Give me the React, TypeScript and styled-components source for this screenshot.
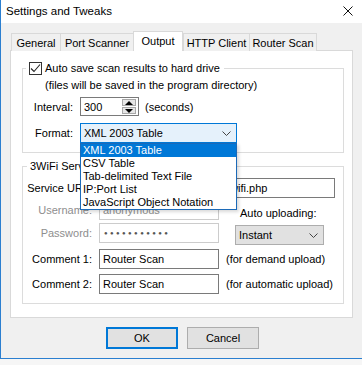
import React from 'react';
import styled, { createGlobalStyle } from 'styled-components';

const GlobalStyle = createGlobalStyle`
  html, body {
    margin: 0;
    padding: 0;
    background: #f6f6f6;
    overflow: hidden;
  }
  body {
    font-family: "Liberation Sans", Arial, sans-serif;
    font-size: 11px;
    color: #000;
  }
  * {
    box-sizing: border-box;
  }
`;

const tabs = [
  { title: 'General', width: 49 },
  { title: 'Port Scanner', width: 73 },
  { title: 'Output', width: 50 },
  { title: 'HTTP Client', width: 66 },
  { title: 'Router Scan', width: 68 },
];

const formats = [
  'XML 2003 Table',
  'CSV Table',
  'Tab-delimited Text File',
  'IP:Port List',
  'JavaScript Object Notation',
];

function Chevron() {
  return (
    <svg width="9" height="5" viewBox="0 0 9 5">
      <path d="M0.5 0.5 L4.5 4.5 L8.5 0.5" fill="none" stroke="#444" strokeWidth="1" />
    </svg>
  );
}

function App() {
  return (
    <>
      <GlobalStyle />
      <S.Window>
        <S.TitleBar>
          <S.Title>Settings and Tweaks</S.Title>
          <S.Close>
            <svg width="10" height="10" viewBox="0 0 10 10">
              <path d="M0.5 0.5 L9.5 9.5 M9.5 0.5 L0.5 9.5" stroke="#111" strokeWidth="1" />
            </svg>
          </S.Close>
        </S.TitleBar>

        <S.Body>
          <S.TabRow>
            {tabs.map((t, i) => (
              <S.Tab key={t.title} $w={t.width} $active={t.title === 'Output'} $last={i === tabs.length - 1}>
                {t.title}
              </S.Tab>
            ))}
          </S.TabRow>

          <S.Panel>
            <S.Group>
              <S.Legend $left={3}>
                <S.Check>
                  <svg width="11" height="11" viewBox="0 0 11 11">
                    <path d="M1 5.5 L4 8.5 L10 1.5" fill="none" stroke="#222" strokeWidth="1.1" />
                  </svg>
                </S.Check>
                Auto save scan results to hard drive
              </S.Legend>
              <S.Note>(files will be saved in the program directory)</S.Note>

              <S.Row $top={5} $h={19}>
                <S.Label $w={57}>Interval:</S.Label>
                <S.TextBox $w={59} $h={19}>
                  300
                  <S.Spin>
                    <S.SpinHalf>
                      <S.Arrow $up />
                    </S.SpinHalf>
                    <S.SpinHalf>
                      <S.Arrow />
                    </S.SpinHalf>
                  </S.Spin>
                </S.TextBox>
                <S.After $left={6}>(seconds)</S.After>
              </S.Row>

              <S.Row $top={7}>
                <S.Label $w={57}>Format:</S.Label>
                <S.ComboWrap>
                  <S.Combo $w={157} $focused>
                    XML 2003 Table
                    <Chevron />
                  </S.Combo>
                  <S.List>
                    {formats.map((f, i) => (
                      <S.Item key={f} $selected={i === 0}>
                        {f}
                      </S.Item>
                    ))}
                  </S.List>
                </S.ComboWrap>
              </S.Row>
            </S.Group>

            <S.Group $top={6}>
              <S.Legend $left={4}>3WiFi Service</S.Legend>

              <S.Row $top={5}>
                <S.Label $w={76}>Service URL:</S.Label>
                <S.TextBox $w={236}>http://3wifi.stascorp.com/3wifi.php</S.TextBox>
              </S.Row>

              <S.Row $top={2}>
                <S.Label $w={76} $disabled>
                  Username:
                </S.Label>
                <S.TextBox $w={120} $disabled>
                  anonymous
                </S.TextBox>
                <S.After $left={21} $shift={3}>
                  Auto uploading:
                </S.After>
              </S.Row>

              <S.Row $top={3}>
                <S.Label $w={76} $disabled>
                  Password:
                </S.Label>
                <S.TextBox $w={120} $disabled>
                  <S.Dots>●●●●●●●●●●●</S.Dots>
                </S.TextBox>
                <S.Combo $w={89} $left={16} $shift={2}>
                  Instant
                  <Chevron />
                </S.Combo>
              </S.Row>

              <S.Row $top={6}>
                <S.Label $w={76}>Comment 1:</S.Label>
                <S.TextBox $w={120}>Router Scan</S.TextBox>
                <S.After $left={7}>(for demand upload)</S.After>
              </S.Row>

              <S.Row $top={5}>
                <S.Label $w={76}>Comment 2:</S.Label>
                <S.TextBox $w={120}>Router Scan</S.TextBox>
                <S.After $left={7}>(for automatic upload)</S.After>
              </S.Row>
            </S.Group>
          </S.Panel>

          <S.ButtonRow>
            <S.Button $default>OK</S.Button>
            <S.Button>Cancel</S.Button>
          </S.ButtonRow>
        </S.Body>
      </S.Window>
    </>
  );
}

export default App;

// rows are centred, so a top margin of 2n moves an item down by n
const shift = (n?: number) => (n ? `margin-top: ${n * 2}px;` : '');

const S = {
  Window: styled.div`
    width: 362px;
    height: 359px;
    border-left: 1px solid #2b7fd0;
    border-bottom: 1px solid #2b7fd0;
    background: #f0f0f0;
    display: flex;
    flex-direction: column;
    box-shadow: 0 2px 4px rgba(0, 0, 0, 0.08);
  `,
  TitleBar: styled.div`
    height: 23px;
    flex-shrink: 0;
    background: #fff;
    display: flex;
    align-items: center;
    padding: 0 0 2px 5px;
  `,
  Title: styled.div`
    font-size: 11.5px;
    color: #000;
  `,
  Close: styled.div`
    margin-left: auto;
    margin-right: 9px;
    display: flex;
    margin-top: 1px;
  `,
  Body: styled.div`
    padding: 8px 0 0 9px;
  `,
  TabRow: styled.div`
    display: flex;
    align-items: flex-end;
    height: 20px;
    padding-left: 1px;
  `,
  Tab: styled.div<{ $w: number; $active?: boolean; $last?: boolean }>`
    width: ${(p) => p.$w}px;
    height: ${(p) => (p.$active ? 20 : 18)}px;
    display: flex;
    align-items: center;
    justify-content: center;
    padding-bottom: ${(p) => (p.$active ? 2 : 0)}px;
    background: ${(p) => (p.$active ? '#fff' : '#f0f0f0')};
    border-top: 1px solid #d9d9d9;
    border-left: 1px solid #d9d9d9;
    border-right: ${(p) => (p.$active || p.$last ? '1px solid #d9d9d9' : 'none')};
    position: relative;
    z-index: ${(p) => (p.$active ? 1 : 0)};
    white-space: nowrap;
  `,
  Panel: styled.div`
    width: 343px;
    height: 268px;
    margin-top: -1px;
    background: #fff;
    border: 1px solid #d9d9d9;
    padding: 10px 0 0 11px;
  `,
  Group: styled.fieldset<{ $top?: number }>`
    width: 322px;
    margin: ${(p) => p.$top ?? 0}px 0 0 0;
    padding: 0 0 9px 0;
    border: 1px solid #dcdcdc;
    min-width: 0;
  `,
  Legend: styled.legend<{ $left: number }>`
    display: flex;
    align-items: center;
    gap: 3px;
    height: 14px;
    margin-left: ${(p) => p.$left}px;
    padding: 0 4px 0 3px;
    line-height: 14px;
  `,
  Check: styled.span`
    width: 13px;
    height: 13px;
    border: 1px solid #333;
    background: #fff;
    display: flex;
    align-items: center;
    justify-content: center;
  `,
  Note: styled.div`
    margin: 3px 0 0 22px;
    height: 14px;
    line-height: 14px;
  `,
  Row: styled.div<{ $top: number; $h?: number }>`
    display: flex;
    align-items: center;
    height: ${(p) => p.$h ?? 20}px;
    margin-top: ${(p) => p.$top}px;
  `,
  Label: styled.div<{ $w: number; $disabled?: boolean }>`
    width: ${(p) => p.$w}px;
    flex-shrink: 0;
    padding-right: 7px;
    text-align: right;
    white-space: nowrap;
    color: ${(p) => (p.$disabled ? '#8e8e8e' : '#000')};
  `,
  TextBox: styled.div<{ $w: number; $h?: number; $disabled?: boolean }>`
    width: ${(p) => p.$w}px;
    height: ${(p) => p.$h ?? 20}px;
    flex-shrink: 0;
    border: 1px solid ${(p) => (p.$disabled ? '#cccccc' : '#7a7a7a')};
    background: #fff;
    color: ${(p) => (p.$disabled ? '#8e8e8e' : '#000')};
    display: flex;
    align-items: center;
    padding: 0 2px 0 3px;
    overflow: hidden;
    white-space: nowrap;
  `,
  Dots: styled.span`
    font-size: 6px;
    letter-spacing: 2.4px;
    color: #555;
    padding-left: 1px;
  `,
  Spin: styled.div`
    margin-left: auto;
    width: 14px;
    height: 15px;
    display: flex;
    flex-direction: column;
    gap: 1px;
  `,
  SpinHalf: styled.div`
    flex: 1;
    background: #e6e6e6;
    border: 1px solid #a8a8a8;
    display: flex;
    align-items: center;
    justify-content: center;
  `,
  Arrow: styled.span<{ $up?: boolean }>`
    width: 0;
    height: 0;
    border-left: 4px solid transparent;
    border-right: 4px solid transparent;
    ${(p) => (p.$up ? 'border-bottom: 4px solid #000;' : 'border-top: 4px solid #000;')}
  `,
  After: styled.div<{ $left: number; $shift?: number }>`
    margin-left: ${(p) => p.$left}px;
    ${(p) => shift(p.$shift)}
    white-space: nowrap;
  `,
  ComboWrap: styled.div`
    position: relative;
  `,
  Combo: styled.div<{ $w: number; $focused?: boolean; $left?: number; $shift?: number }>`
    width: ${(p) => p.$w}px;
    height: 20px;
    margin-left: ${(p) => p.$left ?? 0}px;
    ${(p) => shift(p.$shift)}
    display: flex;
    align-items: center;
    justify-content: space-between;
    padding: 0 5px 0 3px;
    background: ${(p) => (p.$focused ? '#e5f1fb' : '#e1e1e1')};
    border: 1px solid ${(p) => (p.$focused ? '#0078d7' : '#adadad')};
    white-space: nowrap;
  `,
  List: styled.div`
    position: absolute;
    top: 100%;
    left: 0;
    width: 157px;
    background: #fff;
    border: 1px solid #1c6ab8;
    box-shadow: 2px 2px 3px rgba(0, 0, 0, 0.15);
    z-index: 5;
  `,
  Item: styled.div<{ $selected?: boolean }>`
    height: 13px;
    line-height: 13px;
    padding-left: 2px;
    white-space: nowrap;
    background: ${(p) => (p.$selected ? '#0078d7' : '#fff')};
    color: ${(p) => (p.$selected ? '#fff' : '#000')};
  `,
  ButtonRow: styled.div`
    display: flex;
    gap: 9px;
    margin-top: 9px;
    padding-left: 96px;
  `,
  Button: styled.div<{ $default?: boolean }>`
    width: 72px;
    height: 22px;
    display: flex;
    align-items: center;
    justify-content: center;
    background: #e1e1e1;
    border: ${(p) => (p.$default ? '2px solid #0078d7' : '1px solid #adadad')};
  `,
};
